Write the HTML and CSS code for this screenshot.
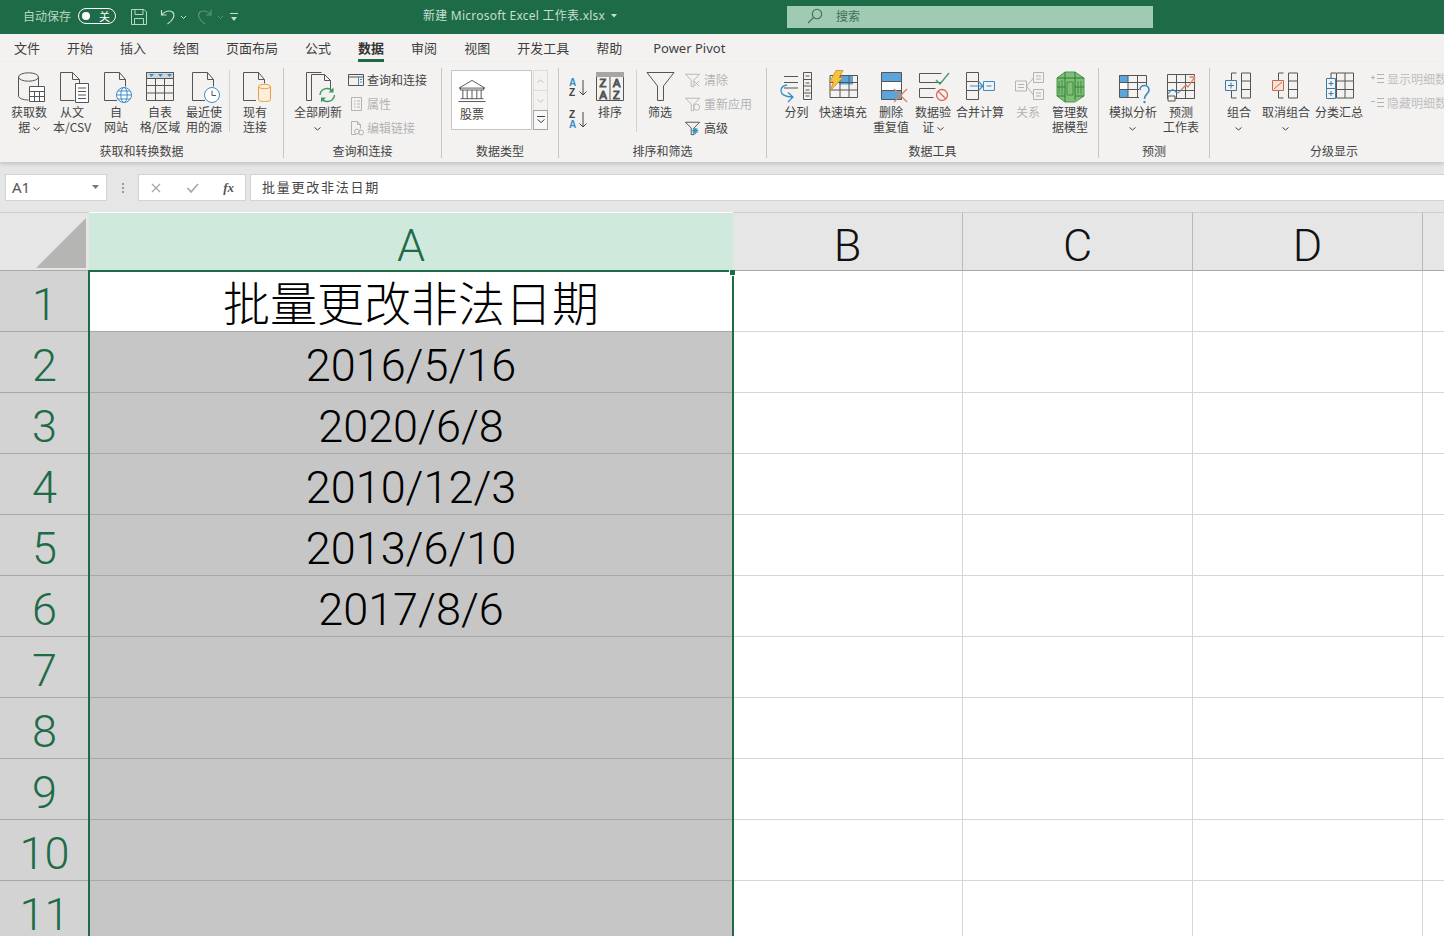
FILE: index.html
```html
<!DOCTYPE html>
<html lang="zh-CN">
<head>
<meta charset="utf-8">
<title>新建 Microsoft Excel 工作表.xlsx</title>
<link rel="stylesheet" href="styles.css">
</head>
<body>
<div class="app">
<header class="titlebar">
  <div class="qat">
    <span class="autosave">自动保存</span>
    <span class="toggle"><i class="knob"></i><b>关</b></span>
    <svg class="q-save" width="16" height="16" viewBox="0 0 16 16" fill="none" stroke="#b7d6c6"><path d="M.5.5h12.5l2.5 2.5v12.5H.5z"/><path d="M4 .5v5h8v-5M3.5 15.5v-6h9v6"/></svg>
    <svg class="q-undo" width="28" height="16" viewBox="0 0 28 16" fill="none" stroke="#c4dfd1" stroke-width="1.2"><path d="M1.5 1v5h5M1.5 6c3-4 8-5 11-3 3 3 1 8-5 12"/><path d="M21 7l2.500 2.500L26 7" stroke-width="1"/></svg>
    <svg class="q-redo" width="28" height="16" viewBox="0 0 28 16" fill="none" stroke="#5d9479" stroke-width="1.2"><path d="M14 1v5H9M14 6c-3-4-8-5-11-3-3 3-1 8 5 12"/><path d="M21 7l2.500 2.500L26 7" stroke-width="1"/></svg>
    <svg class="q-more" width="8" height="10" viewBox="0 0 8 10" fill="#c4dfd1"><path d="M0 1h8v1H0zM1 5h6L4 9z"/></svg>
  </div>
  <div class="doc-title">新建 Microsoft Excel 工作表.xlsx<svg class="caret" width="6" height="4" viewBox="0 0 6 4" fill="#c4dfd1"><path d="M0 0h6L3 3.500z"/></svg></div>
  <div class="search">
    <svg width="16" height="16" viewBox="0 0 16 16" fill="none" stroke="#3d6f57" stroke-width="1.1"><circle cx="10" cy="6" r="4.700"/><path d="M6.500 9.500L1 15"/></svg>
    <span>搜索</span>
  </div>
</header>

<nav class="tabs">
  <span>文件</span><span>开始</span><span>插入</span><span>绘图</span><span>页面布局</span><span>公式</span><span class="on">数据</span><span>审阅</span><span>视图</span><span>开发工具</span><span>帮助</span><span class="pp">Power Pivot</span>
</nav>

<section class="ribbon">
  <div class="group g1">
    <div class="body">
      <div class="item w42">
        <svg class="ic" viewBox="0 0 36 34" fill="none" stroke="#555"><path d="M7.500 7v19c0 2 4 4 10 4M27.500 7v9"/><ellipse cx="17.500" cy="7" rx="10" ry="4.200"/><path fill="#fff" d="M18.500 16.500h15v15h-15z"/><path d="M18.500 21.500h15M18.500 26.500h15M23.500 21.500v10M28.500 21.500v10"/></svg>
        <div class="lb">获取数<br>据 <svg class="chev" viewBox="0 0 7 4"><path d="M.5.500l3 2.500 3-2.500"/></svg></div>
      </div>
      <div class="item w44">
        <svg class="ic" viewBox="0 0 36 34" fill="none" stroke="#555"><path d="M20.500 30.500h-14v-28h12l7 7v5M18.500 2.500v7h7"/><path fill="#fff" d="M21.500 13.500h13v19h-13z"/><path d="M24 18h8M24 21.500h8M24 25h8M24 28.500h8"/></svg>
        <div class="lb">从文<br>本/CSV</div>
      </div>
      <div class="item w44">
        <svg class="ic" viewBox="0 0 36 34" fill="none" stroke="#555"><path d="M19 30.500H6.500v-28h15l6 7v7M21.500 2.500v7h6"/><circle cx="26" cy="25" r="7.500" fill="#fff" stroke="#3a8dc5"/><ellipse cx="26" cy="25" rx="3.200" ry="7.500" stroke="#3a8dc5"/><path d="M18.500 25h15M20 21h12M20 29h12" stroke="#3a8dc5"/></svg>
        <div class="lb">自<br>网站</div>
      </div>
      <div class="item w44">
        <svg class="ic" viewBox="0 0 36 34" fill="none" stroke="#555"><path d="M4.500 2.500h27v28h-27z"/><path fill="#cfd8dc" d="M4.500 2.500h27v6h-27z"/><path d="M4.500 15.500h27M4.500 23h27M13.500 8.500v22M22.500 8.500v22"/><path fill="#3a8dc5" stroke="none" d="M7 4h5l-2.500 3zM16 4h5l-2.500 3zM25 4h5l-2.500 3z"/></svg>
        <div class="lb">自表<br>格/区域</div>
      </div>
      <div class="item w44">
        <svg class="ic" viewBox="0 0 36 34" fill="none" stroke="#555"><path d="M19 30.500H6.500v-28h15l6 7v7M21.500 2.500v7h6"/><circle cx="26" cy="25" r="7.500" fill="#fff" stroke="#3a8dc5"/><path d="M26 20.500v5h4" stroke="#555"/></svg>
        <div class="lb">最近使<br>用的源</div>
      </div>
      <i class="vsep s1"></i>
      <div class="item w44 ml3">
        <svg class="ic" viewBox="0 0 36 34" fill="none" stroke="#555"><path d="M19 30.500H6.500v-28h15l6 7v4M21.500 2.500v7h6"/><path fill="#fbeedd" stroke="#e5a03c" d="M21.500 16.500v13c0 1.500 2.500 2 6 2s6-.500 6-2v-13"/><ellipse cx="27.500" cy="16.500" rx="6" ry="2.200" fill="#fbeedd" stroke="#e5a03c"/></svg>
        <div class="lb">现有<br>连接</div>
      </div>
    </div>
    <div class="cap">获取和转换数据</div>
  </div>

  <div class="group g2">
    <div class="body">
      <div class="item w50">
        <svg class="ic" viewBox="0 0 36 34" fill="none" stroke="#555"><path d="M11.500 30.500h-5v-28h15"/><path fill="#f3f2f1" d="M11.500 30.500v-26h13l6 6v10"/><path d="M24.500 4.500v6h6"/><path stroke="#3c9a63" stroke-width="1.400" d="M20 25c0-4 4-7 8-6.500 2 .200 3.500 1.200 4.500 2.500M34.500 25c0 4-4 7-8 6.500-2-.200-3.500-1.200-4.500-2.500"/><path fill="#3c9a63" stroke="none" d="M33.500 17.500v5h-5zM21 32.500v-5h5z"/></svg>
        <div class="lb">全部刷新<br><svg class="chev" viewBox="0 0 7 4"><path d="M.5.500l3 2.500 3-2.500"/></svg></div>
      </div>
      <div class="small-col ml5">
        <div class="sm"><svg viewBox="0 0 16 16" fill="none" stroke="#555"><path d="M.5 2.500h15v11H.5zM.5 5h15"/><path d="M10.500 5v8.500" stroke="#3a8dc5"/><path d="M12 7.500h2M12 10h2" stroke="#3a8dc5"/></svg>查询和连接</div>
        <div class="sm off"><svg viewBox="0 0 16 16" fill="none" stroke="#b3b3b3"><path d="M3.500 1.500h10v13h-10zM6 5h1.500M9 5h3M6 8h1.500M9 8h3M6 11h1.500M9 11h3"/></svg>属性</div>
        <div class="sm off"><svg viewBox="0 0 16 16" fill="none" stroke="#b3b3b3"><path d="M8 14.500H3.500v-13h6l3 3v4M9.500 1.500v3h3"/><circle cx="9" cy="11.500" r="2.500"/><circle cx="13" cy="12.500" r="2.500"/></svg>编辑链接</div>
      </div>
    </div>
    <div class="cap">查询和连接</div>
  </div>

  <div class="group g3">
    <div class="body">
      <div class="gallery">
        <div class="gal-main">
          <svg width="30" height="25" viewBox="0 0 30 26" fill="none" stroke="#555"><path d="M1.500 10.500h27L15 2.500zM3 10.500v2h24v-2M5.500 12.500v9M10 12.500v9M15 12.500v9M20 12.500v9M24.500 12.500v9M3 21.500h24M1 24.500h28"/></svg>
          <span>股票</span>
        </div>
        <div class="gal-scroll">
          <span class="sb"><svg width="7" height="4" viewBox="0 0 7 4" fill="none" stroke="#c0c0c0"><path d="M.5 3.500l3-2.500 3 2.500"/></svg></span>
          <span class="sb"><svg width="7" height="4" viewBox="0 0 7 4" fill="none" stroke="#c0c0c0"><path d="M.5.500l3 2.500 3-2.500"/></svg></span>
          <span class="sb active"><svg width="8" height="8" viewBox="0 0 8 8" fill="none" stroke="#444"><path d="M0 .5h8M.5 3.500l3.500 3 3.500-3"/></svg></span>
        </div>
      </div>
    </div>
    <div class="cap">数据类型</div>
  </div>

  <div class="group g4">
    <div class="body">
      <div class="sort-col">
        <svg width="20" height="22" viewBox="0 0 20 22" fill="none"><text x="1" y="9" class="t-blue">A</text><text x="1" y="19" class="t-dark">Z</text><path d="M15 3v15M11.500 14.500L15 18l3.500-3.500" stroke="#444"/></svg>
        <svg width="20" height="22" viewBox="0 0 20 22" fill="none"><text x="1" y="9" class="t-dark">Z</text><text x="1" y="19" class="t-blue">A</text><path d="M15 3v15M11.500 14.500L15 18l3.500-3.500" stroke="#444"/></svg>
      </div>
      <div class="item w36 ml2">
        <svg class="ic" viewBox="0 0 36 34" fill="none" stroke="#555"><path d="M4.500 2.500h27v28h-27zM18 7v23.500"/><path fill="#a6a6a6" stroke="none" d="M4 2h28v5H4z"/><text x="7.500" y="17" class="t-big t-thin-d">Z</text><text x="7.500" y="29" class="t-big t-thin-b">A</text><text x="21" y="17" class="t-big t-thin-b">A</text><text x="21" y="29" class="t-big t-thin-d">Z</text></svg>
        <div class="lb">排序</div>
      </div>
      <i class="vsep s2"></i>
      <div class="item w40 ml3">
        <svg class="ic" viewBox="0 0 36 34" fill="none" stroke="#555"><path d="M5 2.500h27L21.500 16v14.500h-6V16z"/></svg>
        <div class="lb">筛选</div>
      </div>
      <div class="small-col ml5">
        <div class="sm"><svg viewBox="0 0 18 16" fill="none" stroke="#b3b3b3"><path d="M.5 1.500h16L10 8v7.500H7V8z"/><path d="M10 9l6 6M16 9l-6 6"/></svg><span class="off">清除</span></div>
        <div class="sm"><svg viewBox="0 0 18 16" fill="none" stroke="#b3b3b3"><path d="M.5 1.500h16L10 8v7.500H7V8z"/><circle cx="13" cy="11.500" r="3.500"/></svg><span class="off">重新应用</span></div>
        <div class="sm"><svg viewBox="0 0 18 16" fill="none" stroke="#444"><path d="M.5 1.500h16L10 8v7.500H7V8z"/><path d="M8 11h7M11.500 8v7M9 8.500l5 5M14 8.500l-5 5" stroke="#3a8dc5" stroke-width="1.300"/></svg>高级</div>
      </div>
    </div>
    <div class="cap">排序和筛选</div>
  </div>

  <div class="group g5">
    <div class="body">
      <div class="item w37">
        <svg class="ic" viewBox="0 0 36 34" fill="none" stroke="#555"><path d="M24.500 2.500h8v27h-8zM24.500 9.500h8M24.500 16h8M24.500 23h8M26.500 6h4M26.500 13h4M26.500 20h4M26.500 26h4"/><path d="M5 6.500h14M5 12.500h14M5 18h14"/><path stroke="#3a8dc5" stroke-width="1.300" d="M8 15c-4 .500-6 3-6 6s4 6 11 6M9 22.500l5 4.500-5 5"/></svg>
        <div class="lb">分列</div>
      </div>
      <div class="item w56">
        <svg class="ic" viewBox="0 0 36 34" fill="none" stroke="#555"><path fill="#5aa6dc" stroke="none" d="M14 5.500h14v9H14z"/><path d="M5 5.500h27.500v22H5zM5 12.500h27.500M5 20h27.500M15 5.500v22M24 5.500v22"/><path fill="#f6c344" stroke="#c98a1a" stroke-width=".8" d="M11 .5h7l-4 7h4L5 21l3.500-9H4.500z"/></svg>
        <div class="lb">快速填充</div>
      </div>
      <div class="item w40">
        <svg class="ic" viewBox="0 0 36 34" fill="none" stroke="#555"><path fill="#5aa6dc" d="M8.500 2.500h20v9h-20z"/><path fill="#fff" d="M8.500 11.500h20v9h-20z"/><path fill="#5aa6dc" d="M8.500 20.500h20v9h-20z"/><path stroke="#d9805f" stroke-width="1.400" d="M21 19l13 13M34 19L21 32"/></svg>
        <div class="lb">删除<br>重复值</div>
      </div>
      <div class="item w44">
        <svg class="ic" viewBox="0 0 36 34" fill="none" stroke="#555"><path d="M4.500 3.500h22M4.500 3.500v9h22M4.500 18.500h16M4.500 18.500v9h14"/><path stroke="#4a9a6a" stroke-width="1.400" d="M21 10l4 4 9-11"/><circle cx="27" cy="25" r="5.500" stroke="#d9674e" stroke-width="1.300"/><path stroke="#d9674e" stroke-width="1.300" d="M23 21l8 8"/></svg>
        <div class="lb">数据验<br>证 <svg class="chev" viewBox="0 0 7 4"><path d="M.5.500l3 2.500 3-2.500"/></svg></div>
      </div>
      <div class="item w50">
        <svg class="ic" viewBox="0 0 36 34" fill="none" stroke="#555"><path d="M4.500 2.500h12v9h-12zM4.500 11.500v9h12v-9M4.500 20.500v9h12v-9"/><path stroke="#3a8dc5" stroke-width="1.200" d="M8 16h12M16.500 11.500L21 16l-4.500 4.500"/><path stroke="#3a8dc5" d="M21.500 11.500h11v9h-11zM24.500 16h5"/></svg>
        <div class="lb">合并计算</div>
      </div>
      <div class="item w46">
        <svg class="ic" viewBox="0 0 36 34" fill="none" stroke="#b3b3b3"><path d="M23.500 2.500h10v10h-10zM23.500 19.500h10v10h-10zM5.500 11h11v10h-11zM16.500 16l7-8M16.500 16l7 9M26 6h5M26 9h5M26 23h5M26 26h5M8 14.500h6M8 17.500h6"/></svg>
        <div class="lb off">关系</div>
      </div>
      <div class="item w38">
        <svg class="ic" viewBox="0 0 36 34" fill="none"><path fill="#7fbf74" stroke="#4a9a50" d="M5 8l8-6h10l9 6v18l-9 6H13l-8-6z"/><path stroke="#2f7d3f" d="M13 2v6l-8 0M23 2v6h9M13 8h10v22M13 8v24M5 17h8M23 17h9M5 26h8M23 26h9"/><path stroke="#3f8f46" d="M15 12h6v13h-6zM7 11v13M10 10v15M26 11v13M29 11v13"/></svg>
        <div class="lb">管理数<br>据模型</div>
      </div>
    </div>
    <div class="cap">数据工具</div>
  </div>

  <div class="group g6">
    <div class="body">
      <div class="item w52">
        <svg class="ic" viewBox="0 0 36 34" fill="none" stroke="#555"><path fill="#5aa6dc" stroke="none" d="M4 5h9v22H4z"/><path fill="#fff" stroke="none" d="M4 13h9v6H4z"/><path d="M4.500 5.500h27v22h-27zM4.500 12.500h27M4.500 19.500h27M13 5.500v22M22.500 5.500v22"/><path fill="#f3f2f1" stroke="none" d="M24 15h12v19H24z"/><path stroke="#3a8dc5" stroke-width="1.700" d="M25 20c0-6 9-6 9 0 0 4-4.500 4-4.500 9"/><circle cx="29.500" cy="32" r="1.200" fill="#3a8dc5" stroke="none"/></svg>
        <div class="lb">模拟分析<br><svg class="chev" viewBox="0 0 7 4"><path d="M.5.500l3 2.500 3-2.500"/></svg></div>
      </div>
      <div class="item w44">
        <svg class="ic" viewBox="0 0 36 34" fill="none" stroke="#555"><path d="M4.500 4.500h27v24h-27zM4.500 12.500h27M4.500 20.500h27M13.500 4.500v24M22.500 4.500v24"/><path stroke="#3a8dc5" stroke-width="1.200" d="M5 24c3-5 5-5 7-3 2 3 4 2 6-1"/><path fill="#f3f2f1" stroke="#555" d="M5 26h7v5H5z"/><path stroke="#d9805f" stroke-width="1.300" d="M18 20l5-5 2 2 6-9M26.500 7h5v5"/></svg>
        <div class="lb">预测<br>工作表</div>
      </div>
    </div>
    <div class="cap">预测</div>
  </div>

  <div class="group g7">
    <div class="body">
      <div class="item w44">
        <svg class="ic" viewBox="0 0 36 34" fill="none" stroke="#555"><path d="M20.500 3h9v25h-9zM20.500 11h9M20.500 19.500h9"/><path d="M15.500 3h-5v7M10.500 20v8h5"/><path fill="#f3f2f1" stroke="#3a7ca8" d="M4.500 10.500h11v10h-11z"/><path stroke="#3a7ca8" d="M7 15.500h6M10 12.500v6"/></svg>
        <div class="lb">组合<br><svg class="chev" viewBox="0 0 7 4"><path d="M.5.500l3 2.500 3-2.500"/></svg></div>
      </div>
      <div class="item w50">
        <svg class="ic" viewBox="0 0 36 34" fill="none" stroke="#555"><path d="M20.500 3h9v25h-9zM20.500 11h9M20.500 19.500h9"/><path d="M15.500 3h-5v7M10.500 20v8h5"/><path fill="#f7e3d8" stroke="#c9694a" d="M4.500 10.500h11v10h-11z"/><path stroke="#c9694a" d="M6 19l8-7"/></svg>
        <div class="lb">取消组合<br><svg class="chev" viewBox="0 0 7 4"><path d="M.5.500l3 2.500 3-2.500"/></svg></div>
      </div>
      <div class="item w56">
        <svg class="ic" viewBox="0 0 36 34" fill="none" stroke="#555"><path d="M15.500 3h17v25h-17zM15.500 11h17M15.500 19.500h17M24 3v25"/><path d="M15 3h-5v5"/><path fill="#f3f2f1" stroke="#3a7ca8" d="M5.500 8.500h9v10h-9zM5.500 18.500h9v10h-9z"/><path stroke="#3a7ca8" d="M7.500 13.500h5M10 11v5M7.500 23.500h5M10 21v5"/></svg>
        <div class="lb">分类汇总</div>
      </div>
      <div class="small-col ml3 detail">
        <div class="sm"><svg viewBox="0 0 16 16" fill="none" stroke="#b3b3b3"><path d="M1 6.500h4M3 4.500v4M7 3.500h7M7 7.500h7M7 11.500h7"/></svg>显示明细数据</div>
        <div class="sm"><svg viewBox="0 0 16 16" fill="none" stroke="#b3b3b3"><path d="M1 6.500h4M7 3.500h7M7 7.500h7M7 11.500h7"/></svg>隐藏明细数据</div>
      </div>
    </div>
    <div class="cap">分级显示</div>
  </div>
</section>

<section class="fbar">
  <div class="namebox">A1<svg width="7" height="4" viewBox="0 0 7 4" fill="#777"><path d="M0 0h7L3.500 4z"/></svg></div>
  <div class="dots"><i></i><i></i><i></i></div>
  <div class="fx">
    <svg width="12" height="12" viewBox="0 0 12 12" stroke="#a6a6a6" stroke-width="1.200" fill="none"><path d="M2 2l8 8M10 2l-8 8"/></svg>
    <svg width="14" height="12" viewBox="0 0 14 12" stroke="#a6a6a6" stroke-width="1.600" fill="none"><path d="M1.500 6l3.500 4 7-8"/></svg>
    <em>fx</em>
  </div>
  <div class="formula">批量更改非法日期</div>
</section>

<main class="sheet">
  <div class="row head">
    <div class="rh corner"><svg width="50" height="50" viewBox="0 0 50 50"><path fill="#b5b5b3" d="M50 0v50H0z"/></svg></div>
    <div class="ch a">A</div><div class="ch b">B</div><div class="ch b">C</div><div class="ch b">D</div><div class="ch e"></div>
  </div>
  <div class="row"><div class="rh">1</div><div class="cell a first cn">批量更改非法日期</div><div class="cell b"></div><div class="cell b"></div><div class="cell b"></div><div class="cell e"></div></div>
  <div class="row"><div class="rh">2</div><div class="cell a">2016/5/16</div><div class="cell b"></div><div class="cell b"></div><div class="cell b"></div><div class="cell e"></div></div>
  <div class="row"><div class="rh">3</div><div class="cell a">2020/6/8</div><div class="cell b"></div><div class="cell b"></div><div class="cell b"></div><div class="cell e"></div></div>
  <div class="row"><div class="rh">4</div><div class="cell a">2010/12/3</div><div class="cell b"></div><div class="cell b"></div><div class="cell b"></div><div class="cell e"></div></div>
  <div class="row"><div class="rh">5</div><div class="cell a">2013/6/10</div><div class="cell b"></div><div class="cell b"></div><div class="cell b"></div><div class="cell e"></div></div>
  <div class="row"><div class="rh">6</div><div class="cell a">2017/8/6</div><div class="cell b"></div><div class="cell b"></div><div class="cell b"></div><div class="cell e"></div></div>
  <div class="row"><div class="rh">7</div><div class="cell a"></div><div class="cell b"></div><div class="cell b"></div><div class="cell b"></div><div class="cell e"></div></div>
  <div class="row"><div class="rh">8</div><div class="cell a"></div><div class="cell b"></div><div class="cell b"></div><div class="cell b"></div><div class="cell e"></div></div>
  <div class="row"><div class="rh">9</div><div class="cell a"></div><div class="cell b"></div><div class="cell b"></div><div class="cell b"></div><div class="cell e"></div></div>
  <div class="row"><div class="rh">10</div><div class="cell a"></div><div class="cell b"></div><div class="cell b"></div><div class="cell b"></div><div class="cell e"></div></div>
  <div class="row"><div class="rh">11</div><div class="cell a"></div><div class="cell b"></div><div class="cell b"></div><div class="cell b"></div><div class="cell e"></div></div>
  <div class="selection"><i class="handle"></i></div>
</main>
</div>
</body>
</html>
```

FILE: styles.css
```css
* { box-sizing: border-box; }
html, body { margin: 0; height: 100%; overflow: hidden; }
body { font-family: "Noto Sans CJK SC", "Noto Sans", sans-serif; font-size: 12px; color: #444; background: #fff; }
.app { width: 1444px; height: 936px; overflow: hidden; display: flex; flex-direction: column; }

/* Title bar */
.titlebar { height: 34px; flex: none; background: #1e6b48; display: flex; align-items: center; color: #c4dfd1; }
.qat { width: 423px; flex: none; display: flex; align-items: center; padding-left: 23px; }
.autosave { color: #b7d6c6; width: 55px; margin-bottom: 3px; }
.toggle { width: 38px; height: 16px; margin-bottom: 2px; border: 1.5px solid #fff; border-radius: 8px; display: flex; align-items: center; justify-content: space-between; padding: 0 5px 0 3px; }
.knob { width: 8px; height: 8px; background: #fff; border-radius: 50%; }
.toggle b { font-weight: 400; font-size: 11px; color: #fff; line-height: 12px; }
.q-save { margin-left: 15px; }
.q-undo { margin-left: 13px; }
.q-redo { margin-left: 9px; }
.q-more { margin-left: 5px; }
.doc-title { width: 364px; flex: none; white-space: nowrap; font-family: "Noto Sans", "Noto Sans CJK SC", sans-serif; font-size: 12px; letter-spacing: .24px; margin-bottom: 5px; }
.caret { margin-left: 6px; vertical-align: middle; }
.search { width: 366px; height: 22px; flex: none; background: #9fcbb4; display: flex; align-items: center; padding: 0 0 3px 20px; gap: 13px; color: #3d6f57; }

/* Tabs */
.tabs { height: 28px; flex: none; background: #f3f2f1; display: flex; gap: 27px; padding-left: 14px; font-size: 13px; line-height: 28px; color: #3f3f3f; }
.tabs .on { font-weight: 700; position: relative; color: #333; }
.tabs .on::after { content: ""; position: absolute; left: 0; right: 0; top: 25px; height: 3px; background: #1e6b48; }
.tabs .pp { margin-left: 4px; font-family: "Noto Sans", sans-serif; }

/* Ribbon */
.ribbon { height: 100px; flex: none; background: #f3f2f1; display: flex; padding-top: 6px; box-shadow: 0 2px 4px rgba(0,0,0,.16); position: relative; z-index: 2; }
.group { height: 90px; flex: none; display: flex; flex-direction: column; border-right: 1px solid #c8c6c4; }
.g1 { width: 284px; padding-left: 8px; }
.g2 { width: 158px; padding-left: 9px; }
.g3 { width: 117px; padding-left: 9px; }
.g4 { width: 208px; padding-left: 7px; }
.g5 { width: 332px; padding-left: 11px; }
.g6 { width: 111px; padding-left: 8px; }
.g7 { width: 248px; padding-left: 7px; border-right: 0; }
.body { height: 76px; flex: none; display: flex; }
.cap { height: 14px; line-height: 14px; text-align: center; white-space: nowrap; margin-left: -8px; color: #444; }
.g2 .cap { margin-left: -9px; } .g3 .cap { margin-left: -9px; } .g4 .cap { margin-left: -7px; } .g5 .cap { margin-left: -11px; } .g7 .cap { margin-left: -7px; }
.item { flex: none; display: flex; flex-direction: column; align-items: center; padding-top: 2px; }
.w36 { width: 36px; } .w37 { width: 37px; } .w38 { width: 38px; } .w40 { width: 40px; } .w42 { width: 42px; } .w44 { width: 44px; } .w46 { width: 46px; } .w50 { width: 50px; } .w52 { width: 52px; } .w56 { width: 56px; }
.ml2 { margin-left: 2px; } .ml3 { margin-left: 3px; } .ml5 { margin-left: 5px; }
.ic { width: 36px; height: 34px; flex: none; display: block; }
.lb { line-height: 15px; text-align: center; white-space: nowrap; }
.off { color: #b3b3b3; }
.chev { width: 7px; height: 4px; fill: none; stroke: #444; vertical-align: middle; }
.vsep { flex: none; width: 1px; background: #d4d2d0; margin-top: 2px; height: 62px; }
.s1 { margin-left: 3px; }
.s2 { margin-left: 8px; }
.small-col { display: flex; flex-direction: column; gap: 1px; }
.sm { height: 23px; display: flex; align-items: center; white-space: nowrap; gap: 3px; }
.sm svg { width: 16px; height: 16px; flex: none; }
.detail { margin-top: -1px; color: #c0c0c0; }
.detail .sm { gap: 1px; }

/* Gallery */
.gallery { display: flex; margin-top: 2px; height: 60px; }
.gal-main { width: 81px; background: #fff; border: 1px solid #c8c6c4; padding: 7px 0 0 5px; display: flex; flex-direction: column; }
.gal-main span { margin: 3px 0 0 3px; line-height: 16px; }
.gal-scroll { display: flex; flex-direction: column; margin-left: 1px; width: 15px; }
.sb { height: 20px; flex: none; display: flex; align-items: center; justify-content: center; border: 1px solid #dedcda; border-bottom: 0; background: #f3f2f1; }
.sb.active { border: 1px solid #a8a6a4; background: #f8f8f8; }

/* Sort */
.sort-col { width: 24px; flex: none; display: flex; flex-direction: column; align-items: center; gap: 10px; padding-top: 9px; }
.t-blue { fill: #3a8dc5; font: 700 10px "Liberation Sans", sans-serif; }
.t-dark { fill: #444; font: 700 10px "Liberation Sans", sans-serif; }
.t-big { font: 400 11px "Liberation Sans", sans-serif; }
.t-thin-d { fill: #444; }
.t-thin-b { fill: #3a8dc5; }

/* Formula bar */
.fbar { height: 50px; flex: none; background: #e6e6e6; display: flex; align-items: flex-start; padding: 12px 0 0 5px; }
.namebox { width: 102px; height: 27px; background: #fff; border: 1px solid #d2d2d2; display: flex; align-items: center; justify-content: space-between; padding: 0 7px 2px 6px; font: 15px "Noto Sans", sans-serif; color: #555; }
.dots { width: 31px; height: 27px; display: flex; flex-direction: column; align-items: center; justify-content: center; gap: 2px; }
.dots i { width: 2px; height: 2px; background: #999; }
.fx { width: 108px; height: 27px; background: #fff; border: 1px solid #d2d2d2; display: flex; align-items: center; justify-content: space-between; padding: 0 11px 0 11px; }
.fx em { font: italic 700 13px "Liberation Serif", serif; color: #555; }
.formula { flex: 1; height: 27px; margin-left: 4px; background: #fff; border: 1px solid #d2d2d2; border-right: 0; line-height: 23px; padding-left: 11px; font-size: 13px; letter-spacing: 1.75px; color: #444; }

/* Sheet */
.sheet { position: relative; flex: 1; overflow: hidden; background: #fff; }
.row { display: flex; height: 61px; }
.row.head { height: 59px; }
.rh { width: 89px; flex: none; background: #d3d3d3; border-bottom: 1px solid #a8a8a8; color: #1e6b48; font: 300 45px/53px Roboto, sans-serif; padding-top: 7px; text-align: center; }
.corner { background: #e6e6e6; border-bottom: 1px solid #a8a8a8; padding: 5px 0 0 36px; line-height: 0; text-align: left; }
.ch { flex: none; background: #e6e6e6; border-bottom: 1px solid #a8a8a8; border-right: 1px solid #b8b8b8; font: 300 45px/52px Roboto, sans-serif; padding-top: 7px; text-align: center; color: #111; }
.ch.a { width: 644px; background: #cfeadd; color: #1e6b48; border-right: 0; margin-top: 1px; padding-top: 7px; }
.ch.b { width: 230px; border-top: 1px solid #cfcfcf; padding-top: 7px; }
.ch.e { flex: 1; border-right: 0; border-top: 1px solid #cfcfcf; }
.head .corner { border-top: 1px solid #cfcfcf; }
.cell { flex: none; border-bottom: 1px solid #d6d6d6; border-right: 1px solid #d6d6d6; }
.cell.a { width: 644px; background: #c6c6c6; border-right: 0; border-bottom: 1px solid #a9a9a9; text-align: center; color: #000; font: 300 45px/53px Roboto, sans-serif; padding-top: 7px; letter-spacing: 0; }
.cell.first { background: #fff; }
.cell.cn { font: 300 47px/60px "Noto Sans CJK SC", sans-serif; padding-top: 0; letter-spacing: 0; }
.cell.b { width: 230px; }
.cell.e { flex: 1; border-right: 0; }
.selection { position: absolute; left: 88px; top: 58px; width: 646px; height: 700px; border: 2px solid #1e6b48; border-bottom: 0; }
.handle { position: absolute; right: -3px; top: -2px; width: 6px; height: 6px; background: #1e6b48; border: 1px solid #fff; border-top: 0; border-right: 0; }
```
